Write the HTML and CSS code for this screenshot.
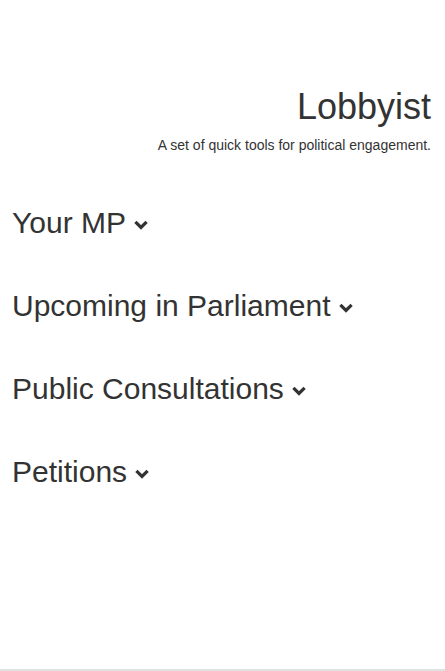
FILE: index.html
```html
<!DOCTYPE html>
<html lang="en">
<head>
<meta charset="utf-8">
<title>Lobbyist</title>
<link rel="stylesheet" href="styles.css">
</head>
<body>
<div class="page">
  <header class="masthead">
    <h1 class="title">Lobbyist</h1>
    <p class="tagline">A set of quick tools for political engagement.</p>
  </header>
  <main class="sections">
    <h2 class="section-title">Your MP <svg class="chev" width="14" height="10" viewBox="0 0 14 10"><polyline points="1.4,1.8 7,7.4 12.6,1.8" fill="none" stroke="#333" stroke-width="3.2"/></svg></h2>
    <h2 class="section-title">Upcoming in Parliament <svg class="chev" width="14" height="10" viewBox="0 0 14 10"><polyline points="1.4,1.8 7,7.4 12.6,1.8" fill="none" stroke="#333" stroke-width="3.2"/></svg></h2>
    <h2 class="section-title">Public Consultations <svg class="chev" width="14" height="10" viewBox="0 0 14 10"><polyline points="1.4,1.8 7,7.4 12.6,1.8" fill="none" stroke="#333" stroke-width="3.2"/></svg></h2>
    <h2 class="section-title">Petitions <svg class="chev" width="14" height="10" viewBox="0 0 14 10"><polyline points="1.4,1.8 7,7.4 12.6,1.8" fill="none" stroke="#333" stroke-width="3.2"/></svg></h2>
  </main>
</div>
</body>
</html>
```
FILE: styles.css
```css
html, body {
  margin: 0;
  padding: 0;
  background: #fff;
}
body {
  font-family: "Liberation Sans", Arial, sans-serif;
  font-size: 14px;
  line-height: 1.42857;
  color: #333;
}
.page {
  box-sizing: border-box;
  min-height: 100vh;
  padding: 87px 14px 0 12px;
  border-bottom: 2px solid #e2e2e2;
}
.masthead {
  text-align: right;
}
.title {
  margin: 0 0 8px;
  font-size: 36px;
  font-weight: 500;
  line-height: 1.1;
}
.tagline {
  margin: 0;
  font-size: 14px;
  line-height: 20px;
}
.sections {
  display: flex;
  flex-direction: column;
  gap: 50px;
  margin-top: 51px;
}
.section-title {
  margin: 0;
  font-size: 30px;
  font-weight: 500;
  line-height: 33px;
}
.chev {
  vertical-align: 3px;
}
```
